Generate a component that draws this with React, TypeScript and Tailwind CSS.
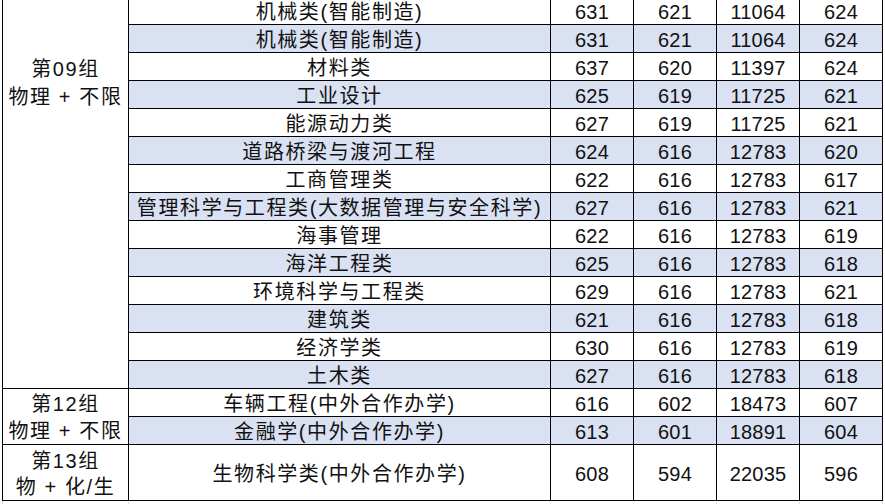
import React from "react";

type Row = [string, number, number, number, number];

const rows09: Row[] = [
  ["机械类(智能制造)", 631, 621, 11064, 624],
  ["机械类(智能制造)", 631, 621, 11064, 624],
  ["材料类", 637, 620, 11397, 624],
  ["工业设计", 625, 619, 11725, 621],
  ["能源动力类", 627, 619, 11725, 621],
  ["道路桥梁与渡河工程", 624, 616, 12783, 620],
  ["工商管理类", 622, 616, 12783, 617],
  ["管理科学与工程类(大数据管理与安全科学)", 627, 616, 12783, 621],
  ["海事管理", 622, 616, 12783, 619],
  ["海洋工程类", 625, 616, 12783, 618],
  ["环境科学与工程类", 629, 616, 12783, 621],
  ["建筑类", 621, 616, 12783, 618],
  ["经济学类", 630, 616, 12783, 619],
  ["土木类", 627, 616, 12783, 618],
];
const rows12: Row[] = [
  ["车辆工程(中外合作办学)", 616, 602, 18473, 607],
  ["金融学(中外合作办学)", 613, 601, 18891, 604],
];
const rows13: Row[] = [["生物科学类(中外合作办学)", 608, 594, 22035, 596]];

const cjk = "font-['Liberation_Sans','Noto_Sans_CJK_SC',sans-serif] text-[20px] tracking-[1.6px] text-[#111]";
const num = "font-['Liberation_Sans','Noto_Sans_CJK_SC',sans-serif] text-[20px] tracking-[0.2px] text-[#111]";

function Cells({ r, blue, tall }: { r: Row; blue: boolean; tall?: boolean }) {
  const bg = blue ? "bg-[#d9e1f2]" : "bg-white";
  const span = tall ? "row-span-2" : "";
  return (
    <>
      <div className={`${bg} ${span} ${cjk} flex items-center justify-center pt-[3px] leading-none whitespace-nowrap overflow-hidden`}>
        {r[0]}
      </div>
      {r.slice(1).map((v, i) => (
        <div key={i} className={`${bg} ${span} ${num} flex items-center justify-center pt-[3px] leading-none overflow-hidden`}>
          {v}
        </div>
      ))}
    </>
  );
}

export default function App() {
  return (
    <div className="w-[885px] h-[504px] overflow-hidden bg-white">
      <div className="pl-[2px] mt-[-4px]">
        <div className="grid w-[881px] grid-cols-[125px_421px_82px_82px_82px_82px] auto-rows-[27px] gap-px bg-black p-px">
          <div className={`row-span-14 bg-white ${cjk} flex flex-col items-center pt-[58px] leading-[28px]`}>
            <div>第09组</div>
            <div>物理 + 不限</div>
          </div>
          {rows09.map((r, i) => (
            <Cells key={"a" + i} r={r} blue={i % 2 === 1} />
          ))}
          <div className={`row-span-2 bg-white ${cjk} flex flex-col items-center justify-center pt-[3px] leading-[27px]`}>
            <div>第12组</div>
            <div>物理 + 不限</div>
          </div>
          {rows12.map((r, i) => (
            <Cells key={"b" + i} r={r} blue={i % 2 === 1} />
          ))}
          <div className={`row-span-2 bg-white ${cjk} flex flex-col items-center justify-center pt-[2px] leading-[26px]`}>
            <div>第13组</div>
            <div>物 + 化/生</div>
          </div>
          {rows13.map((r, i) => (
            <Cells key={"c" + i} r={r} blue={false} tall />
          ))}
        </div>
        <div className="grid w-[881px] grid-cols-[125px_421px_82px_82px_82px_82px] gap-x-px bg-[#e3e3e3] px-px">
          {[0, 1, 2, 3, 4, 5].map((i) => (
            <div key={i} className="h-[6px] bg-white" />
          ))}
        </div>
      </div>
    </div>
  );
}
